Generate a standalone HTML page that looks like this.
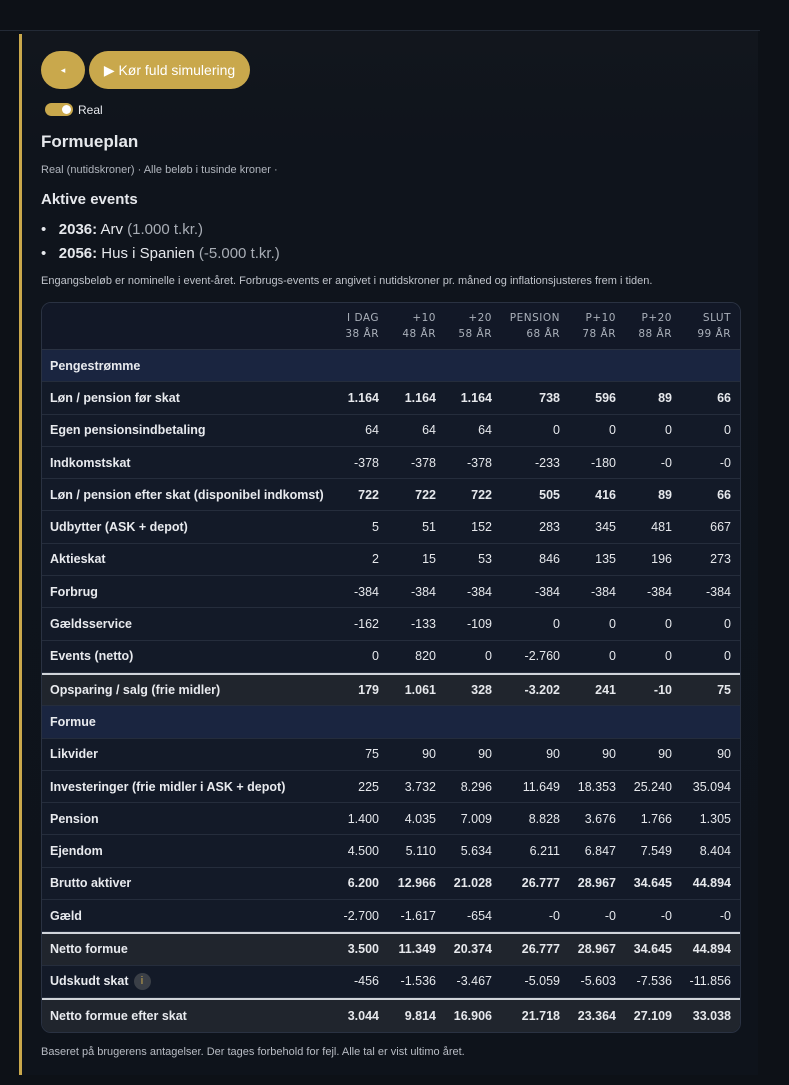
<!DOCTYPE html>
<html><head><meta charset="utf-8"><style>
*{box-sizing:border-box;margin:0;padding:0}
body{width:789px;height:1085px;background:#0d1117;font-family:"Liberation Sans","DejaVu Sans",sans-serif;color:#e6e8ec;position:relative;overflow:hidden}
.topline{position:absolute;left:0;top:30px;width:760px;height:1px;background:#232a36}
.bar{position:absolute;left:19px;top:34px;width:3px;height:1041px;background:#c9a84c}
.card{position:absolute;left:22px;top:31px;width:736px;height:1044px;background:linear-gradient(#12161d,#0f141c 120px,#0e131b)}
.btn{position:absolute;background:#c9a84c;color:#fff;border-radius:20px;height:38px;top:51px;font-size:14px;display:flex;align-items:center;justify-content:center}
.tog{position:absolute;left:45px;top:103px;width:28px;height:13px;border-radius:7px;background:#c9a84c}
.tog:after{content:"";position:absolute;right:2px;top:2px;width:9px;height:9px;border-radius:50%;background:#fff}
.t{position:absolute;left:41px;white-space:nowrap}
table{position:absolute;left:41px;top:302px;width:700px;border-collapse:separate;border-spacing:0;border:1px solid #2a3242;border-radius:10px;overflow:hidden;font-size:12.5px;table-layout:fixed}
td,th{border-bottom:1px solid #252d3c;height:32.3px;padding:0 9px 0 0;text-align:right;background:#131a28;white-space:nowrap;vertical-align:middle}
td:first-child{text-align:left;font-weight:bold;padding-left:8px;color:#e8eaee;overflow:visible}
th{font-family:"DejaVu Sans",sans-serif;font-size:10.5px;color:#aab0ba;font-weight:normal;height:47px;line-height:16px;letter-spacing:.5px;background:#121827;border-bottom:1px solid #2a3242}
tr.sec td{background:#1a2540;font-weight:bold}
tr.b td{font-weight:bold}
tr.tot td{background:#20252d;font-weight:bold;height:33.3px}
tr.tb td{border-top:2px solid #d0d4da}
tr:last-child td{border-bottom:none;height:34px}
.lab{display:flex;align-items:center}
.i{display:inline-block;width:17px;height:17px;border-radius:50%;background:#3a3f47;color:#c9a84c;font-size:11px;text-align:center;line-height:17px;margin-left:5px;font-weight:normal}
</style></head><body>
<div class="topline"></div>
<div class="card"></div>
<div class="bar"></div>
<div class="btn" style="left:41px;width:44px;font-size:9px">◂</div>
<div class="btn" style="left:89px;width:161px">▶ Kør fuld simulering</div>
<div class="tog"></div>
<div class="t" style="left:78px;top:103px;font-size:12px">Real</div>
<div class="t" style="top:132px;font-size:17px;font-weight:bold">Formueplan</div>
<div class="t" style="top:164px;font-size:11px;color:#b0b5bd">Real (nutidskroner) · Alle beløb i tusinde kroner ·</div>
<div class="t" style="top:191px;font-size:15px;font-weight:bold">Aktive events</div>
<div class="t" style="top:221px;font-size:15px">•&nbsp;&nbsp;&nbsp;<b>2036:</b> Arv <span style="color:#a8adb5">(1.000 t.kr.)</span></div>
<div class="t" style="top:245px;font-size:15px">•&nbsp;&nbsp;&nbsp;<b>2056:</b> Hus i Spanien <span style="color:#a8adb5">(-5.000 t.kr.)</span></div>
<div class="t" style="top:275px;font-size:11px;color:#c0c4cb">Engangsbeløb er nominelle i event-året. Forbrugs-events er angivet i nutidskroner pr. måned og inflationsjusteres frem i tiden.</div>
<table>
<colgroup><col style="width:289px"><col style="width:57px"><col style="width:57px"><col style="width:56px"><col style="width:68px"><col style="width:56px"><col style="width:56px"><col style="width:59px"></colgroup>
<tr><th></th><th>I DAG<br>38 ÅR</th><th>+10<br>48 ÅR</th><th>+20<br>58 ÅR</th><th>PENSION<br>68 ÅR</th><th>P+10<br>78 ÅR</th><th>P+20<br>88 ÅR</th><th>SLUT<br>99 ÅR</th></tr>
<tr class="sec"><td colspan="8">Pengestrømme</td></tr>
<tr class="b"><td>Løn / pension før skat</td><td>1.164</td><td>1.164</td><td>1.164</td><td>738</td><td>596</td><td>89</td><td>66</td></tr>
<tr><td>Egen pensionsindbetaling</td><td>64</td><td>64</td><td>64</td><td>0</td><td>0</td><td>0</td><td>0</td></tr>
<tr><td>Indkomstskat</td><td>-378</td><td>-378</td><td>-378</td><td>-233</td><td>-180</td><td>-0</td><td>-0</td></tr>
<tr class="b"><td>Løn / pension efter skat (disponibel indkomst)</td><td>722</td><td>722</td><td>722</td><td>505</td><td>416</td><td>89</td><td>66</td></tr>
<tr><td>Udbytter (ASK + depot)</td><td>5</td><td>51</td><td>152</td><td>283</td><td>345</td><td>481</td><td>667</td></tr>
<tr><td>Aktieskat</td><td>2</td><td>15</td><td>53</td><td>846</td><td>135</td><td>196</td><td>273</td></tr>
<tr><td>Forbrug</td><td>-384</td><td>-384</td><td>-384</td><td>-384</td><td>-384</td><td>-384</td><td>-384</td></tr>
<tr><td>Gældsservice</td><td>-162</td><td>-133</td><td>-109</td><td>0</td><td>0</td><td>0</td><td>0</td></tr>
<tr><td>Events (netto)</td><td>0</td><td>820</td><td>0</td><td>-2.760</td><td>0</td><td>0</td><td>0</td></tr>
<tr class="tot tb"><td>Opsparing / salg (frie midler)</td><td>179</td><td>1.061</td><td>328</td><td>-3.202</td><td>241</td><td>-10</td><td>75</td></tr>
<tr class="sec"><td colspan="8">Formue</td></tr>
<tr><td>Likvider</td><td>75</td><td>90</td><td>90</td><td>90</td><td>90</td><td>90</td><td>90</td></tr>
<tr><td>Investeringer (frie midler i ASK + depot)</td><td>225</td><td>3.732</td><td>8.296</td><td>11.649</td><td>18.353</td><td>25.240</td><td>35.094</td></tr>
<tr><td>Pension</td><td>1.400</td><td>4.035</td><td>7.009</td><td>8.828</td><td>3.676</td><td>1.766</td><td>1.305</td></tr>
<tr><td>Ejendom</td><td>4.500</td><td>5.110</td><td>5.634</td><td>6.211</td><td>6.847</td><td>7.549</td><td>8.404</td></tr>
<tr class="b"><td>Brutto aktiver</td><td>6.200</td><td>12.966</td><td>21.028</td><td>26.777</td><td>28.967</td><td>34.645</td><td>44.894</td></tr>
<tr><td>Gæld</td><td>-2.700</td><td>-1.617</td><td>-654</td><td>-0</td><td>-0</td><td>-0</td><td>-0</td></tr>
<tr class="tot tb"><td>Netto formue</td><td>3.500</td><td>11.349</td><td>20.374</td><td>26.777</td><td>28.967</td><td>34.645</td><td>44.894</td></tr>
<tr><td><div class="lab">Udskudt skat<span class="i">i</span></div></td><td>-456</td><td>-1.536</td><td>-3.467</td><td>-5.059</td><td>-5.603</td><td>-7.536</td><td>-11.856</td></tr>
<tr class="tot tb"><td>Netto formue efter skat</td><td>3.044</td><td>9.814</td><td>16.906</td><td>21.718</td><td>23.364</td><td>27.109</td><td>33.038</td></tr>
</table>
<div class="t" style="top:1046px;font-size:11px;color:#b8bcc4">Baseret på brugerens antagelser. Der tages forbehold for fejl. Alle tal er vist ultimo året.</div>
</body></html>
